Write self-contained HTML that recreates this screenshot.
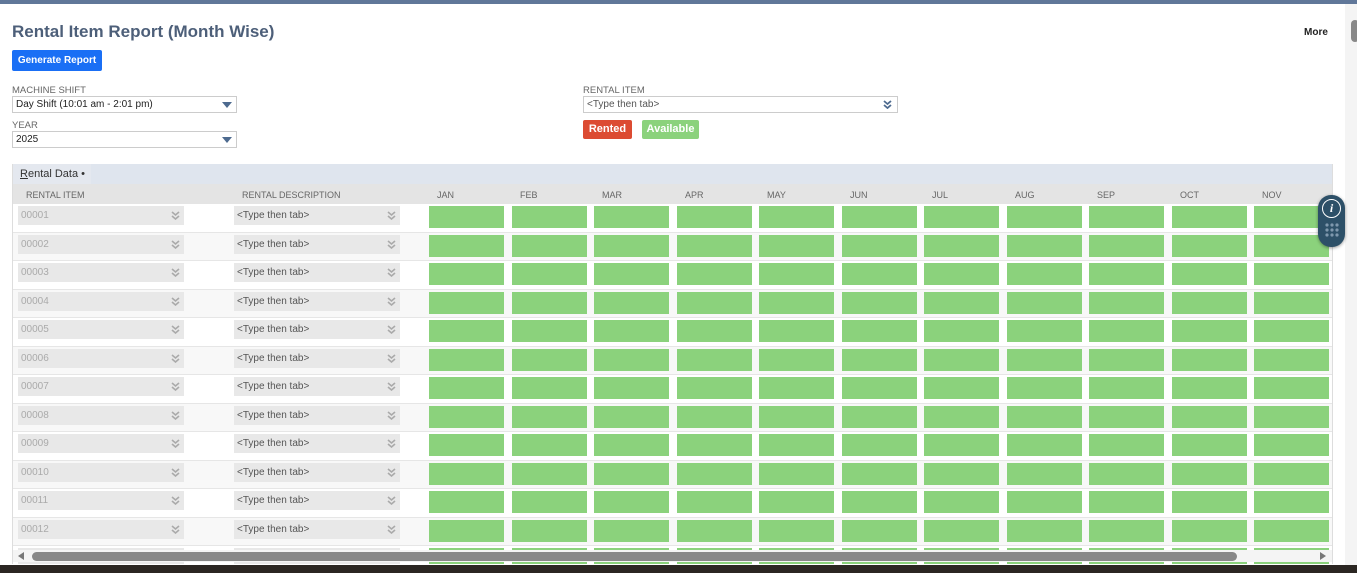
<!DOCTYPE html>
<html><head><style>
*{margin:0;padding:0;box-sizing:border-box}
body{width:1357px;height:573px;overflow:hidden;background:#fff;font-family:"Liberation Sans",Arial,sans-serif;position:relative}
.a{position:absolute}
.topbar{left:0;top:0;width:1357px;height:4px;background:#607799}
h1{position:absolute;left:12px;top:22px;font-size:17px;color:#4d5f79;font-weight:bold}
.btn{left:12px;top:50px;width:90px;height:21px;background:#1a6ff5;color:#fff;font-size:10px;font-weight:bold;border-radius:2px;text-align:center;line-height:21px}
.lbl{font-size:9.5px;color:#666}
.sel{height:17px;border:1px solid #ccc;font-size:10px;color:#222;padding-left:3px;line-height:15px;background:#fff}
.tri{position:absolute;right:4px;top:5px;width:0;height:0;border-left:5px solid transparent;border-right:5px solid transparent;border-top:6px solid #4d6a8f}
.tbl{left:12px;top:164px;width:1321px;height:400px;border-left:1px solid #ddd;border-right:1px solid #ddd;overflow:hidden}
.tabbar{height:20px;background:#dfe5ee;font-size:11px;color:#333}
.tab{position:absolute;left:0;top:0;width:78px;height:20px;background:#e4e8ef;padding:4px 0 0 7px}
.hdr{height:20px;background:#e4e4e4;position:relative;font-size:9px;color:#666}
.hdr span{position:absolute;top:6px}
.row{height:28.5px;position:relative;border-bottom:1px solid #e6e6e6}
.row:nth-child(even){background:#f8f8f8}
.in{position:absolute;top:2px;height:19px;background:#e8e8e8;font-size:10px;line-height:19px;padding-left:3px}
.i1{left:5px;width:166px;color:#aaa}
.i2{left:221px;width:166px;color:#555}
.dv{position:absolute;right:4px;top:5px}
.m{position:absolute;top:2px;width:75px;height:22px;background:#8bd27c}
</style></head><body>
<div class="a topbar"></div>
<h1>Rental Item Report (Month Wise)</h1>
<div class="a" style="left:1304px;top:27px;font-size:10px;font-weight:bold;color:#222">More</div>
<div class="a" style="left:1345px;top:4px;width:12px;height:561px;background:#f4f4f4"></div>
<div class="a" style="left:1351px;top:20px;width:8px;height:22px;background:#888;border-radius:4px"></div>
<div class="a btn">Generate Report</div>
<div class="a lbl" style="left:12px;top:85px">MACHINE SHIFT</div>
<div class="a sel" style="left:12px;top:96px;width:225px">Day Shift (10:01 am - 2:01 pm)<div class="tri"></div></div>
<div class="a lbl" style="left:12px;top:120px">YEAR</div>
<div class="a sel" style="left:12px;top:131px;width:225px">2025<div class="tri"></div></div>
<div class="a lbl" style="left:583px;top:85px">RENTAL ITEM</div>
<div class="a sel" style="left:583px;top:96px;width:315px;color:#555">&lt;Type then tab&gt;<svg style="position:absolute;right:5px;top:3px" width="9" height="9" viewBox="0 0 9 9"><path d="M1 1l3.5 3 3.5-3M1 5l3.5 3 3.5-3" fill="none" stroke="#4d6a8f" stroke-width="1.8"/></svg></div>
<div class="a" style="left:583px;top:120px;width:49px;height:19px;background:#dc4b32;color:#fff;font-size:11px;font-weight:bold;text-align:center;line-height:19px;border-radius:2px">Rented</div>
<div class="a" style="left:642px;top:120px;width:57px;height:19px;background:#8bd27c;color:#fff;font-size:11px;font-weight:bold;text-align:center;line-height:19px;border-radius:2px">Available</div>
<div class="a tbl">
<div class="tabbar" style="position:relative"><div class="tab"><u>R</u>ental Data &#8226;</div></div>
<div class="hdr"><span style="left:13px">RENTAL ITEM</span><span style="left:229px">RENTAL DESCRIPTION</span>
<span style="left:424px">JAN</span><span style="left:507px">FEB</span><span style="left:589px">MAR</span><span style="left:672px">APR</span><span style="left:754px">MAY</span><span style="left:837px">JUN</span><span style="left:919px">JUL</span><span style="left:1002px">AUG</span><span style="left:1084px">SEP</span><span style="left:1167px">OCT</span><span style="left:1249px">NOV</span></div>
<div id="rows"></div>
</div>
<div class="a" style="left:13px;top:550px;width:1319px;height:12px;background:#f4f4f4"></div>
<div class="a" style="left:18px;top:552px;width:0;height:0;border-top:4px solid transparent;border-bottom:4px solid transparent;border-right:6px solid #777"></div>
<div class="a" style="left:1320px;top:552px;width:0;height:0;border-top:4px solid transparent;border-bottom:4px solid transparent;border-left:6px solid #777"></div>
<div class="a" style="left:32px;top:552px;width:1205px;height:9px;background:#888;border-radius:5px"></div>
<div class="a" style="left:0;top:565px;width:1357px;height:8px;background:#2b2622"></div>
<div class="a" style="left:1318px;top:195px;width:27px;height:52px;background:#2d5068;border-radius:13px;box-shadow:0 1px 3px rgba(0,0,0,.4)"><div style="position:absolute;left:4px;top:4px;width:19px;height:19px;border:1.5px solid #fff;border-radius:50%;color:#fff;font:italic bold 12px 'Liberation Serif',serif;text-align:center;line-height:16px">i</div><svg style="position:absolute;left:7px;top:28px" width="14" height="14"><g fill="#7f98ad"><circle cx="2" cy="2" r="1.6"/><circle cx="7" cy="2" r="1.6"/><circle cx="12" cy="2" r="1.6"/><circle cx="2" cy="7" r="1.6"/><circle cx="7" cy="7" r="1.6"/><circle cx="12" cy="7" r="1.6"/><circle cx="2" cy="12" r="1.6"/><circle cx="7" cy="12" r="1.6"/><circle cx="12" cy="12" r="1.6"/></g></svg></div>
<script>
var ic='<svg class="dv" width="9" height="9" viewBox="0 0 9 9"><path d="M1 1l3.5 3 3.5-3M1 5l3.5 3 3.5-3" fill="none" stroke="#aaa" stroke-width="1.6"/></svg>';
var h='';for(var r=1;r<=13;r++){var n=('0000'+r).slice(-5);h+='<div class="row"><div class="in i1">'+n+ic+'</div><div class="in i2">&lt;Type then tab&gt;'+ic+'</div>';for(var i=0;i<11;i++)h+='<div class="m" style="left:'+(416+82.5*i)+'px"></div>';h+='</div>';}
document.getElementById('rows').innerHTML=h;
</script>
</body></html>
